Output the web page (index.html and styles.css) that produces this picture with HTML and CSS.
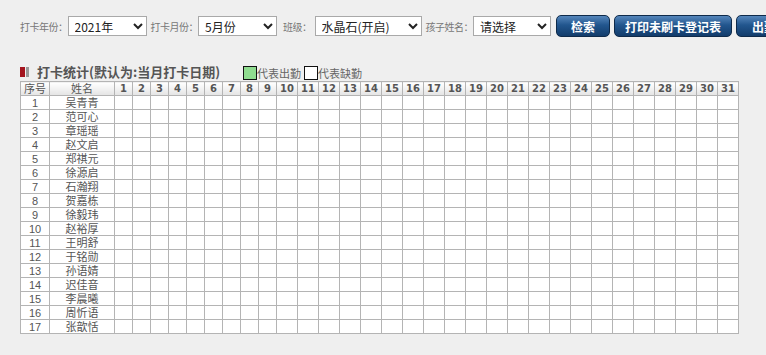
FILE: index.html
```html
<!DOCTYPE html>
<html lang="zh-CN">
<head>
    <meta charset="UTF-8">
    <title>打卡统计</title>
    <link rel="stylesheet" href="styles.css">
</head>
<body>
    <div class="toolbar">
        <span class="label">打卡年份：</span>
        <select class="sel sel-year"><option>2021年</option></select>
        <span class="label">打卡月份：</span>
        <select class="sel sel-month"><option>5月份</option></select>
        <span class="label label-class">班级：</span>
        <select class="sel sel-class"><option>水晶石(开启)</option></select>
        <span class="label">孩子姓名：</span>
        <select class="sel sel-child"><option>请选择</option></select>
        <button class="btn btn-search">检索</button>
        <button class="btn btn-print">打印未刷卡登记表</button>
        <button class="btn btn-more">出勤统计</button>
    </div>

    <div class="title-bar">
        <span class="title-icon"><i class="red"></i><i class="grey"></i></span>
        <span class="title">打卡统计(默认为:当月打卡日期)</span>
        <span class="legend"><i class="box green"></i>代表出勤</span>
        <span class="legend"><i class="box white"></i>代表缺勤</span>
    </div>

    <table class="stat">
        <thead id="head"></thead>
        <tbody id="body"></tbody>
    </table>

    <script>
        var names = ["吴青青", "范可心", "章瑶瑶", "赵文启", "郑祺元", "徐源启", "石瀚翔", "贺嘉栋", "徐毅玮",
            "赵裕厚", "王明舒", "于铭勋", "孙语婧", "迟佳音", "李晨曦", "周忻语", "张歆恬"];

        var head = '<tr><th class="c-no">序号</th><th class="c-name">姓名</th>';
        for (var d = 1; d <= 31; d++) {
            head += '<th class="' + (d < 10 ? 'd1' : 'd2') + '">' + d + '</th>';
        }
        document.getElementById("head").innerHTML = head + '</tr>';

        var rows = '';
        for (var i = 0; i < names.length; i++) {
            rows += '<tr><td>' + (i + 1) + '</td><td>' + names[i] + '</td>';
            for (var k = 1; k <= 31; k++) rows += '<td></td>';
            rows += '</tr>';
        }
        document.getElementById("body").innerHTML = rows;
    </script>
</body>
</html>
```

FILE: styles.css
```css
* {
    box-sizing: border-box;
}

body {
    margin: 0;
    padding: 15px 0 0 20px;
    background: #efefef;
    font-family: "Noto Sans CJK SC", "DejaVu Sans", sans-serif;
    color: #555;
    width: 766px;
    height: 355px;
    overflow: hidden;
}

/* top filter bar */
.toolbar {
    display: flex;
    align-items: center;
    height: 22px;
    white-space: nowrap;
}

.toolbar > * {
    flex: none;
}

.label {
    font-size: 10px;
    color: #777;
    letter-spacing: -0.5px;
}

.label-class {
    padding-left: 2px;
    padding-right: 3px;
}

.sel {
    height: 20px;
    font-family: "Noto Sans CJK SC", sans-serif;
    font-size: 12px;
    color: #222;
    background: #fff;
    border: 1px solid #a9a9a9;
    border-radius: 0;
    padding: 0 2px;
    margin-right: 4px;
}

.sel-year { width: 79px; }
.sel-month { width: 79px; }
.sel-class { width: 107px; }
.sel-child { width: 78px; }

.btn {
    height: 22px;
    padding: 0;
    margin-left: 1px;
    margin-right: 3px;
    border: 1px solid #0e2a4a;
    border-radius: 5px;
    background: linear-gradient(#5586bb, #22568e 45%, #123c6b);
    color: #fff;
    font-family: "Noto Sans CJK SC", sans-serif;
    font-size: 12px;
    font-weight: bold;
}

.btn-search { width: 54px; }
.btn-print { width: 118px; }
.btn-more { width: 80px; }

/* section title */
.title-bar {
    display: flex;
    align-items: flex-end;
    margin-top: 26px;
    height: 17px;
}

.title-icon {
    display: flex;
    align-self: center;
    margin-right: 8px;
    height: 10px;
}

.title-icon i {
    display: block;
    height: 10px;
}

.title-icon .red {
    width: 5px;
    background: #a3141e;
    margin-right: 1px;
}

.title-icon .grey {
    width: 3px;
    background: #999;
}

.title {
    font-size: 13px;
    font-weight: bold;
    color: #555;
    line-height: 17px;
    margin-right: 23px;
}

.legend {
    display: flex;
    align-items: flex-end;
    font-size: 11px;
    color: #666;
    line-height: 13px;
    margin-right: 3px;
}

.box {
    display: block;
    width: 14px;
    height: 14px;
    border: 1px solid #111;
}

.box.green { background: #8fdc8f; }
.box.white { background: #fff; }

/* attendance table */
.stat {
    border-collapse: collapse;
    table-layout: fixed;
    background: #fff;
    margin-top: 1px;
    font-family: "Liberation Sans", "Noto Sans CJK SC", sans-serif;
    font-size: 11px;
}

.stat th,
.stat td {
    border: 1px solid #b4b4b4;
    height: 14px;
    padding: 0;
    text-align: center;
    line-height: 12px;
    overflow: hidden;
    white-space: nowrap;
}

.stat th {
    background: linear-gradient(#fff, #e4e4e4);
    font-family: "DejaVu Sans", sans-serif;
    font-size: 10px;
    font-weight: bold;
    color: #555;
}

.stat th.c-no,
.stat th.c-name {
    font-family: "Liberation Sans", "Noto Sans CJK SC", sans-serif;
    font-weight: normal;
    font-size: 11px;
}

.c-no { width: 29px; }
.c-name { width: 65px; }
.d1 { width: 18px; }
.d2 { width: 21px; }

.stat td {
    color: #555;
}
```
